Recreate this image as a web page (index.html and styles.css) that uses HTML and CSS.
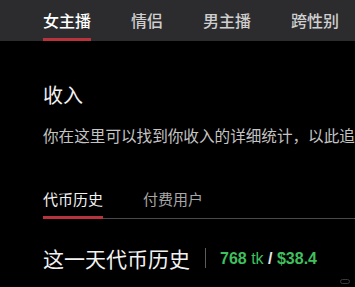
FILE: index.html
```html
<!DOCTYPE html>
<html lang="zh">
<head>
<meta charset="utf-8">
<link rel="stylesheet" href="styles.css">
</head>
<body>
<nav class="topnav">
  <a class="topnav-tab is-active">女主播</a>
  <a class="topnav-tab">情侣</a>
  <a class="topnav-tab">男主播</a>
  <a class="topnav-tab">跨性别</a>
</nav>
<main class="content">
  <h1 class="page-title">收入</h1>
  <p class="page-desc">你在这里可以找到你收入的详细统计，以此追踪你的收入情况</p>
  <div class="subtabs">
    <a class="subtab is-active">代币历史</a>
    <a class="subtab">付费用户</a>
  </div>
  <div class="day-row">
    <h2 class="day-title">这一天代币历史</h2>
    <span class="divider"></span>
    <span class="day-total"><b>768</b> tk <span class="slash">/</span> <b>$38.4</b></span>
  </div>
</main>
<span class="corner-mark"></span>
</body>
</html>
```
FILE: styles.css
```css
* { box-sizing: border-box; }
html, body {
  margin: 0;
  padding: 0;
  background: #000;
  height: 100%;
  overflow: hidden;
}
body {
  font-family: "Noto Sans CJK SC", "Noto Sans", sans-serif;
  color: #fff;
  position: relative;
}
.topnav {
  height: 41px;
  background: #2c2c2e;
  display: flex;
  gap: 40px;
  padding-left: 43px;
}
.topnav-tab {
  height: 41px;
  padding-top: 9px;
  font-size: 16px;
  line-height: 22px;
  color: #cfcfcf;
  font-weight: 500;
  border-bottom: 3px solid transparent;
}
.topnav-tab.is-active {
  color: #fff;
  border-bottom-color: #b8333c;
}
.content {
  padding-left: 43px;
  overflow: hidden;
}
.page-title {
  margin: 40px 0 0;
  font-size: 20px;
  line-height: 28px;
  font-weight: 400;
  color: #f0f0f0;
}
.page-desc {
  margin: 15px 0 0;
  font-size: 15.6px;
  line-height: 22px;
  color: #c4c4c4;
  white-space: nowrap;
  overflow: hidden;
  text-overflow: clip;
}
.subtabs {
  margin-top: 43px;
  display: flex;
  gap: 40px;
  border-bottom: 1px solid #4a4a4a;
}
.subtab {
  font-size: 15px;
  line-height: 20px;
  padding-bottom: 7px;
  color: #a8a8a8;
  border-bottom: 3px solid transparent;
  margin-bottom: -1px;
}
.subtab.is-active {
  color: #f2f2f2;
  border-bottom-color: #b8333c;
}
.day-row {
  margin-top: 24px;
  display: flex;
  align-items: center;
}
.day-title {
  margin: 0;
  font-size: 21px;
  line-height: 30px;
  font-weight: 400;
  color: #f2f2f2;
}
.divider {
  width: 1px;
  height: 20px;
  background: #5c5c5c;
  margin: 0 14px 0 15px;
}
.day-total {
  font-family: "Liberation Sans", Arial, sans-serif;
  font-size: 16px;
  color: #3fbf5e;
  padding-top: 2px;
}
.day-total b { font-weight: 700; }
.slash { color: #e8e8e8; font-weight: 700; }
.corner-mark {
  position: absolute;
  left: 340px;
  top: 279px;
  width: 10px;
  height: 5px;
  border: 1px solid #3a3a3a;
  border-radius: 3px;
}
```
